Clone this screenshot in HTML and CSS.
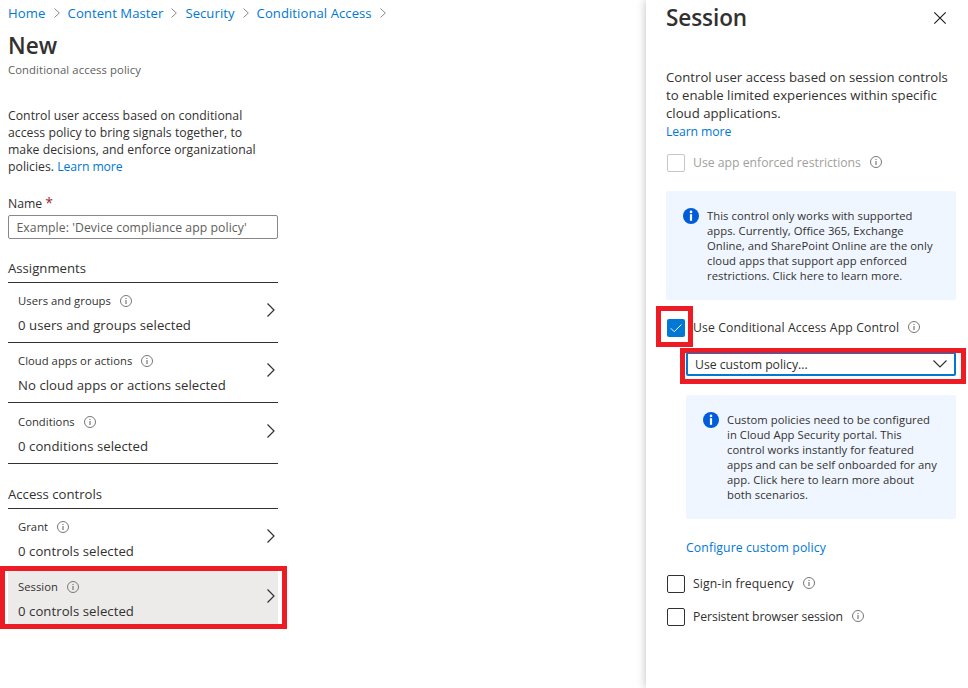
FILE: index.html
```
<!DOCTYPE html>
<html lang="en">
<head>
<meta charset="utf-8">
<title>New - Conditional access policy</title>
<link rel="stylesheet" href="styles.css">
</head>
<body>
<svg class="defs" aria-hidden="true">
  <symbol id="info" viewBox="0 0 12 12"><circle cx="6" cy="6" r="5.5" fill="none" stroke="currentColor"/><path d="M6 5v4M6 3v1" stroke="currentColor" stroke-width="1.2"/></symbol>
  <symbol id="info-solid" viewBox="0 0 16 16"><circle cx="8" cy="8" r="8" fill="#015cda"/><circle cx="8" cy="3.9" r="1.3" fill="#fff"/><path d="M8 6.2v6.6" stroke="#fff" stroke-width="2.2"/></symbol>
  <symbol id="chev" viewBox="0 0 8 14"><path d="M.5.5 7 7 .5 13.500" fill="none" stroke="currentColor" stroke-width="1.2"/></symbol>
  <symbol id="crumb" viewBox="0 0 6 10"><path d="M.5.5 5.300 5 .5 9.500" fill="none" stroke="currentColor"/></symbol>
</svg>
<div class="app">
  <main class="policy">
    <nav class="crumbs">
      <a class="c1">Home</a><svg><use href="#crumb"/></svg>
      <a class="c2">Content Master</a><svg><use href="#crumb"/></svg>
      <a class="c3">Security</a><svg><use href="#crumb"/></svg>
      <a class="c4">Conditional Access</a><svg><use href="#crumb"/></svg>
    </nav>
    <h1 class="title">New</h1>
    <div class="subtitle">Conditional access policy</div>
    <p class="intro">Control user access based on conditional<br>access policy to bring signals together, to<br>make decisions, and enforce organizational<br>policies. <a>Learn more</a></p>
    <div class="label">Name <span class="req">*</span></div>
    <div class="input">Example: 'Device compliance app policy'</div>
    <h2 class="heading assignments">Assignments</h2>
    <div class="row"><div class="row-text"><div class="row-label">Users and groups<svg class="info"><use href="#info"/></svg></div><div class="row-value">0 users and groups selected</div></div><svg class="chev"><use href="#chev"/></svg></div>
    <div class="row"><div class="row-text"><div class="row-label">Cloud apps or actions<svg class="info"><use href="#info"/></svg></div><div class="row-value">No cloud apps or actions selected</div></div><svg class="chev"><use href="#chev"/></svg></div>
    <div class="row tall"><div class="row-text"><div class="row-label">Conditions<svg class="info"><use href="#info"/></svg></div><div class="row-value">0 conditions selected</div></div><svg class="chev"><use href="#chev"/></svg></div>
    <h2 class="heading controls">Access controls</h2>
    <div class="row"><div class="row-text"><div class="row-label">Grant<svg class="info"><use href="#info"/></svg></div><div class="row-value">0 controls selected</div></div><svg class="chev"><use href="#chev"/></svg></div>
    <div class="row selected"><div class="row-text"><div class="row-label">Session<svg class="info"><use href="#info"/></svg></div><div class="row-value">0 controls selected</div></div><svg class="chev"><use href="#chev"/></svg><span class="mark mark-row"></span></div>
  </main>
  <aside class="panel">
    <header class="panel-head"><h1 class="panel-title">Session</h1><svg class="close" viewBox="0 0 12 12"><path d="M.3.3l11.400 11.400M11.700.3L.3 11.700" stroke="#1b1a19" stroke-width="1.1"/></svg></header>
    <p class="panel-intro">Control user access based on session controls<br>to enable limited experiences within specific<br>cloud applications.<br><a>Learn more</a></p>
    <div class="check disabled"><span class="box"></span><span class="text">Use app enforced restrictions</span><svg class="info"><use href="#info"/></svg></div>
    <div class="note"><svg><use href="#info-solid"/></svg><p>This control only works with supported<br>apps. Currently, Office 365, Exchange<br>Online, and SharePoint Online are the only<br>cloud apps that support app enforced<br>restrictions. Click here to learn more.</p></div>
    <div class="check app-control"><span class="box on"><svg viewBox="0 0 18 18"><path d="M3.800 9.300l3.400 3.400 7.200-7.200" fill="none" stroke="#fff" stroke-width="1"/></svg></span><span class="text wide">Use Conditional Access App Control</span><svg class="info"><use href="#info"/></svg><span class="mark mark-check"></span></div>
    <div class="nested">
      <div class="select"><span>Use custom policy...</span><svg viewBox="0 0 14 8"><path d="M.5.5 7 7 13.500.5" fill="none" stroke="#323130" stroke-width="1.2"/></svg><span class="mark mark-select"></span></div>
      <div class="note custom"><svg><use href="#info-solid"/></svg><p>Custom policies need to be configured<br>in Cloud App Security portal. This<br>control works instantly for featured<br>apps and can be self onboarded for any<br>app. Click here to learn more about<br>both scenarios.</p></div>
      <a class="configure">Configure custom policy</a>
    </div>
    <div class="check sign-in"><span class="box"></span><span class="text wide">Sign-in frequency</span><svg class="info"><use href="#info"/></svg></div>
    <div class="check persistent"><span class="box"></span><span class="text tight">Persistent browser session</span><svg class="info"><use href="#info"/></svg></div>
  </aside>
</div>
</body>
</html>
```
FILE: styles.css
```
* { box-sizing: border-box; }
body { margin: 0; background: #fff; color: #323130; font: 12.22px/17px "Open Sans", "Noto Sans", sans-serif; white-space: nowrap; }
h1, h2, p { margin: 0; font-weight: 400; }
a { color: #0078d4; }
svg { display: block; flex: none; overflow: visible; }
.defs { position: absolute; width: 0; height: 0; }
.app { display: flex; justify-content: space-between; width: 968px; height: 688px; overflow: hidden; }

.policy { width: 270px; margin-left: 8px; }
.crumbs { display: flex; align-items: center; height: 26px; font-size: 13.1px; letter-spacing: .06px; }
.crumbs svg { width: 6px; height: 10px; margin: 0 8px; color: #8a8886; }
.crumbs .c1 { letter-spacing: .15px; }
.title { margin-top: 4px; font-size: 22.56px; line-height: 32px; font-weight: 600; }
.subtitle { font-size: 11.28px; line-height: 16px; letter-spacing: .1px; color: #605e5c; }
.intro { margin-top: 29px; letter-spacing: .03px; }
.intro a, .panel-intro a { letter-spacing: -.1px; }
.label { margin-top: 19px; height: 18px; line-height: 19px; }
.req { color: #a4262c; font-size: 14px; line-height: 14px; }
.input { margin-top: 3px; height: 24px; padding-left: 7.5px; border: 1px solid #8a8886; border-radius: 2px; line-height: 23px; letter-spacing: .07px; color: #605e5c; }
.heading { font-size: 13.16px; line-height: 28px; border-bottom: 1px solid #323130; }
.assignments { margin-top: 15px; }
.controls { margin-top: 16px; }
.row { position: relative; display: flex; justify-content: space-between; height: 60px; padding: 9px 3px 0 10px; border-bottom: 1px solid #323130; }
.row.tall { height: 61px; padding-top: 10px; }
.row-label { display: flex; gap: 9px; height: 18px; font-size: 11.28px; line-height: 17px; letter-spacing: .03px; }
.row-label .info { margin-top: 3px; }
.row-value { margin-top: 5px; font-size: 13.16px; line-height: 20px; letter-spacing: .05px; }
.info { width: 12px; height: 12px; color: #797775; }
.chev { width: 8px; height: 14px; margin-top: 11px; }
.controls ~ .row { border-bottom: 0; }
.row.selected { height: 56px; background: #edebe9; }

.mark { position: absolute; border: 5px solid #ed1c24; }
.mark-row { left: -8px; top: -3px; width: 287px; height: 63px; }
.mark-check { left: -10px; top: -13px; width: 37px; height: 41px; }
.mark-select { left: -8px; top: -6px; width: 286px; height: 36px; }

.panel { width: 322px; padding: 0 12px 0 20px; background: #fff; box-shadow: 0 0 9px rgba(0, 0, 0, .26); }
.panel-head { display: flex; align-items: center; justify-content: space-between; height: 36px; padding-right: 10px; }
.panel-title { font-size: 22.56px; line-height: 36px; font-weight: 600; letter-spacing: -.1px; }
.close { width: 12px; height: 12px; }
.panel-intro { height: 72px; margin-top: 32px; font-size: 13.16px; line-height: 18px; letter-spacing: .01px; }
.panel-intro a { font-size: 12.22px; }
.check { position: relative; display: flex; align-items: center; height: 18px; padding-left: 1px; }
.check .text { line-height: 17px; padding-bottom: 1px; }
.check .info { margin: -2px 0 0 9px; }
.box { width: 18px; height: 18px; margin-right: 8px; border: 1px solid #323130; border-radius: 2px; }
.box.on { border: 0; background: #0078d4; }
.wide { letter-spacing: .11px; }
.tight { letter-spacing: -.1px; }
.disabled { margin-top: 14px; color: #a19f9d; }
.disabled .box { border-color: #c8c6c4; }
.note { display: flex; gap: 8px; height: 109px; margin-top: 19px; padding: 17px 0 0 17px; border-radius: 2px; background: #f0f6ff; font-size: 11.28px; line-height: 15px; letter-spacing: .04px; }
.note svg { width: 16px; height: 16px; }
.app-control { margin-top: 19px; }
.nested { margin-left: 20px; }
.select { position: relative; display: flex; align-items: center; justify-content: space-between; height: 24px; margin-top: 15px; padding: 0 7px; border: 2px solid #0078d4; border-radius: 2px; }
.select > svg { width: 14px; height: 8px; }
.custom { height: 124px; }
.configure { display: block; margin-top: 20px; line-height: 18px; letter-spacing: .12px; }
.sign-in { margin-top: 18px; }
.persistent { margin-top: 15px; }
```
